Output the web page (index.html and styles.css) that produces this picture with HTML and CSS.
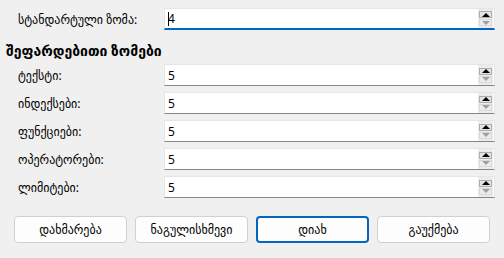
FILE: index.html
```html
<!DOCTYPE html>
<html lang="ka">
<head>
<meta charset="utf-8">
<link rel="stylesheet" href="styles.css">
</head>
<body>
<div class="dialog">
  <div class="row">
    <span class="label">სტანდარტული ზომა:</span>
    <div class="spin focused">
      <span class="value"><span class="caret"></span>4</span>
      <div class="arrows"><span class="btn up"><i></i></span><span class="btn down"><i></i></span></div>
    </div>
  </div>
  <div class="heading">შეფარდებითი ზომები</div>
  <div class="rows">
    <div class="row">
      <span class="label">ტექსტი:</span>
      <div class="spin"><span class="value">5</span>
        <div class="arrows"><span class="btn up"><i></i></span><span class="btn down"><i></i></span></div></div>
    </div>
    <div class="row">
      <span class="label">ინდექსები:</span>
      <div class="spin"><span class="value">5</span>
        <div class="arrows"><span class="btn up"><i></i></span><span class="btn down"><i></i></span></div></div>
    </div>
    <div class="row">
      <span class="label">ფუნქციები:</span>
      <div class="spin"><span class="value">5</span>
        <div class="arrows"><span class="btn up"><i></i></span><span class="btn down"><i></i></span></div></div>
    </div>
    <div class="row">
      <span class="label">ოპერატორები:</span>
      <div class="spin"><span class="value">5</span>
        <div class="arrows"><span class="btn up"><i></i></span><span class="btn down"><i></i></span></div></div>
    </div>
    <div class="row">
      <span class="label">ლიმიტები:</span>
      <div class="spin"><span class="value">5</span>
        <div class="arrows"><span class="btn up"><i></i></span><span class="btn down"><i></i></span></div></div>
    </div>
  </div>
  <div class="buttons">
    <button class="pb">დახმარება</button>
    <button class="pb">ნაგულისხმევი</button>
    <button class="pb default">დიახ</button>
    <button class="pb">გაუქმება</button>
  </div>
</div>
</body>
</html>
```
FILE: styles.css
```css
html, body {
  margin: 0;
  padding: 0;
  background: #f0f0f0;
}
body {
  width: 504px;
  height: 258px;
  overflow: hidden;
  font-family: "Noto Sans", "DejaVu Sans", sans-serif;
  font-size: 12px;
  color: #000;
}
.dialog {
  padding: 8px 9px 0 0;
}
.row {
  display: flex;
  align-items: center;
  height: 22px;
}
.label {
  width: 146px;
  padding-left: 18px;
  white-space: nowrap;
}
.spin {
  flex: 1;
  height: 22px;
  box-sizing: border-box;
  background: #fff;
  border: 1px solid #e6e6e6;
  border-bottom: 1px solid #868686;
  display: flex;
  align-items: center;
  justify-content: space-between;
  padding: 0 1px 0 3px;
}
.spin.focused {
  border-bottom: 2px solid #0067c0;
}
.value {
  display: flex;
  align-items: center;
  font-size: 12px;
}
.caret {
  width: 1px;
  height: 14px;
  background: #000;
  margin-right: -1px;
}
.arrows {
  display: flex;
  flex-direction: column;
  gap: 1px;
  background: #ececec;
  padding: 2px 1px;
  align-self: stretch;
  justify-content: center;
}
.btn {
  width: 13px;
  height: 7px;
  box-sizing: border-box;
  display: flex;
  align-items: center;
  justify-content: center;
}
.btn.up {
  background: #e3e3e3;
  border: 1px solid #adadad;
}
.btn.down {
  background: #ececec;
  border: 1px solid #d9d9d9;
}
.btn i {
  width: 0;
  height: 0;
  border-left: 4px solid transparent;
  border-right: 4px solid transparent;
}
.btn.up i {
  border-bottom: 4px solid #000;
}
.btn.down i {
  border-top: 4px solid #a0a0a0;
}
.heading {
  height: 28px;
  padding: 6px 0 0 6px;
  display: flex;
  align-items: center;
  font-weight: bold;
  font-size: 14px;
}
.rows {
  display: flex;
  flex-direction: column;
  gap: 6px;
}
.buttons {
  display: flex;
  gap: 8px;
  margin-top: 18px;
  padding-left: 14px;
}
.pb {
  width: 113px;
  height: 27px;
  box-sizing: border-box;
  background: #fdfdfd;
  border: 1px solid #d0d0d0;
  border-radius: 4px;
  font-family: "Noto Sans", "DejaVu Sans", sans-serif;
  font-size: 12px;
  color: #000;
  padding: 0;
}
.pb.default {
  border: 2px solid #0067c0;
}
```
